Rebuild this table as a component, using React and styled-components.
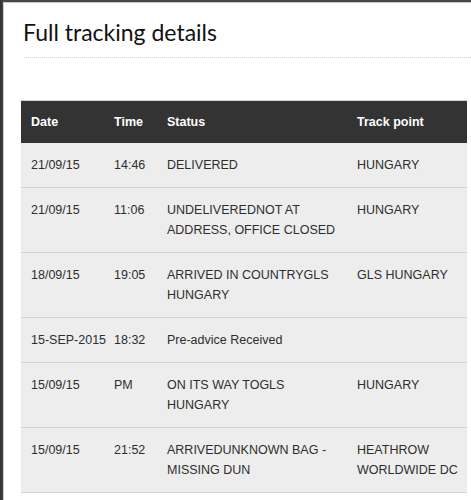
import React from "react";
import styled, { createGlobalStyle } from "styled-components";

const Global = createGlobalStyle`
  html, body { margin: 0; padding: 0; }
  body {
    background: #3d3d3d;
    width: 471px;
    height: 500px;
    overflow: hidden;
  }
`;

const Backdrop = styled.div`
  width: 471px;
  height: 500px;
  overflow: hidden;
  padding: 2px 0 0 3px;
  box-sizing: border-box;
  background: linear-gradient(to right, #2e2e2e 0, #474747 3px);
`;

const Modal = styled.div`
  width: 480px;
  min-height: 520px;
  background: #fff;
  border-top: 1px solid #c9c9c9;
  border-left: 1px solid #c9c9c9;
  padding: 0 17px;
`;

const Header = styled.div`
  margin-left: 3px;
  padding-top: 14px;
  padding-bottom: 10px;
  border-bottom: 1px dotted #cfcfcf;
  margin-right: -40px;
`;

const Title = styled.h2`
  margin: 0 0 0 -1px;
  font-family: Lato, "Open Sans", sans-serif;
  font-weight: 400;
  font-size: 23px;
  line-height: 30px;
  color: #111;
`;

const Body = styled.div`
  padding-top: 42px;
`;

const Table = styled.table`
  width: 446px;
  border-collapse: collapse;
  table-layout: fixed;
  font-family: "Liberation Sans", Arial, sans-serif;
  font-size: 12.5px;
`;

const HeadCell = styled.th`
  background: #333;
  color: #fff;
  font-weight: 700;
  text-align: left;
  padding: 11px ${(p) => p.$pr || "10px"} 11px 10px;
  line-height: 20px;
  border-top: 1px solid #cfcfcf;
`;

const Row = styled.tr`
  background: #ededed;
  border-bottom: 1px solid #d3d3d3;
`;

const Cell = styled.td`
  color: #2e2e2e;
  vertical-align: top;
  padding: 13px ${(p) => p.$pr || "10px"} 12px 10px;
  line-height: 19.4px;
  white-space: ${(p) => (p.$nowrap ? "nowrap" : "normal")};
`;

const rows = [
  ["21/09/15", "14:46", "DELIVERED", "HUNGARY"],
  ["21/09/15", "11:06", "UNDELIVEREDNOT AT ADDRESS, OFFICE CLOSED", "HUNGARY"],
  ["18/09/15", "19:05", "ARRIVED IN COUNTRYGLS HUNGARY", "GLS HUNGARY"],
  ["15-SEP-2015", "18:32", "Pre-advice Received", ""],
  ["15/09/15", "PM", "ON ITS WAY TOGLS HUNGARY", "HUNGARY"],
  ["15/09/15", "21:52", "ARRIVEDUNKNOWN BAG - MISSING DUN", "HEATHROW WORLDWIDE DC"],
];

export default function App() {
  return (
    <>
      <Global />
      <Backdrop>
        <Modal>
          <Header>
            <Title>Full tracking details</Title>
          </Header>
          <Body>
            <Table>
              <colgroup>
                <col style={{ width: 83 }} />
                <col style={{ width: 53 }} />
                <col style={{ width: 190 }} />
                <col style={{ width: 120 }} />
              </colgroup>
              <thead>
                <tr>
                  <HeadCell $pr="0">Date</HeadCell>
                  <HeadCell>Time</HeadCell>
                  <HeadCell>Status</HeadCell>
                  <HeadCell $pr="4px">Track point</HeadCell>
                </tr>
              </thead>
              <tbody>
                {rows.map((r, i) => (
                  <Row key={i}>
                    <Cell $pr="0" $nowrap>{r[0]}</Cell>
                    <Cell>{r[1]}</Cell>
                    <Cell>{r[2]}</Cell>
                    <Cell $pr="4px">{r[3]}</Cell>
                  </Row>
                ))}
              </tbody>
            </Table>
          </Body>
        </Modal>
      </Backdrop>
    </>
  );
}
